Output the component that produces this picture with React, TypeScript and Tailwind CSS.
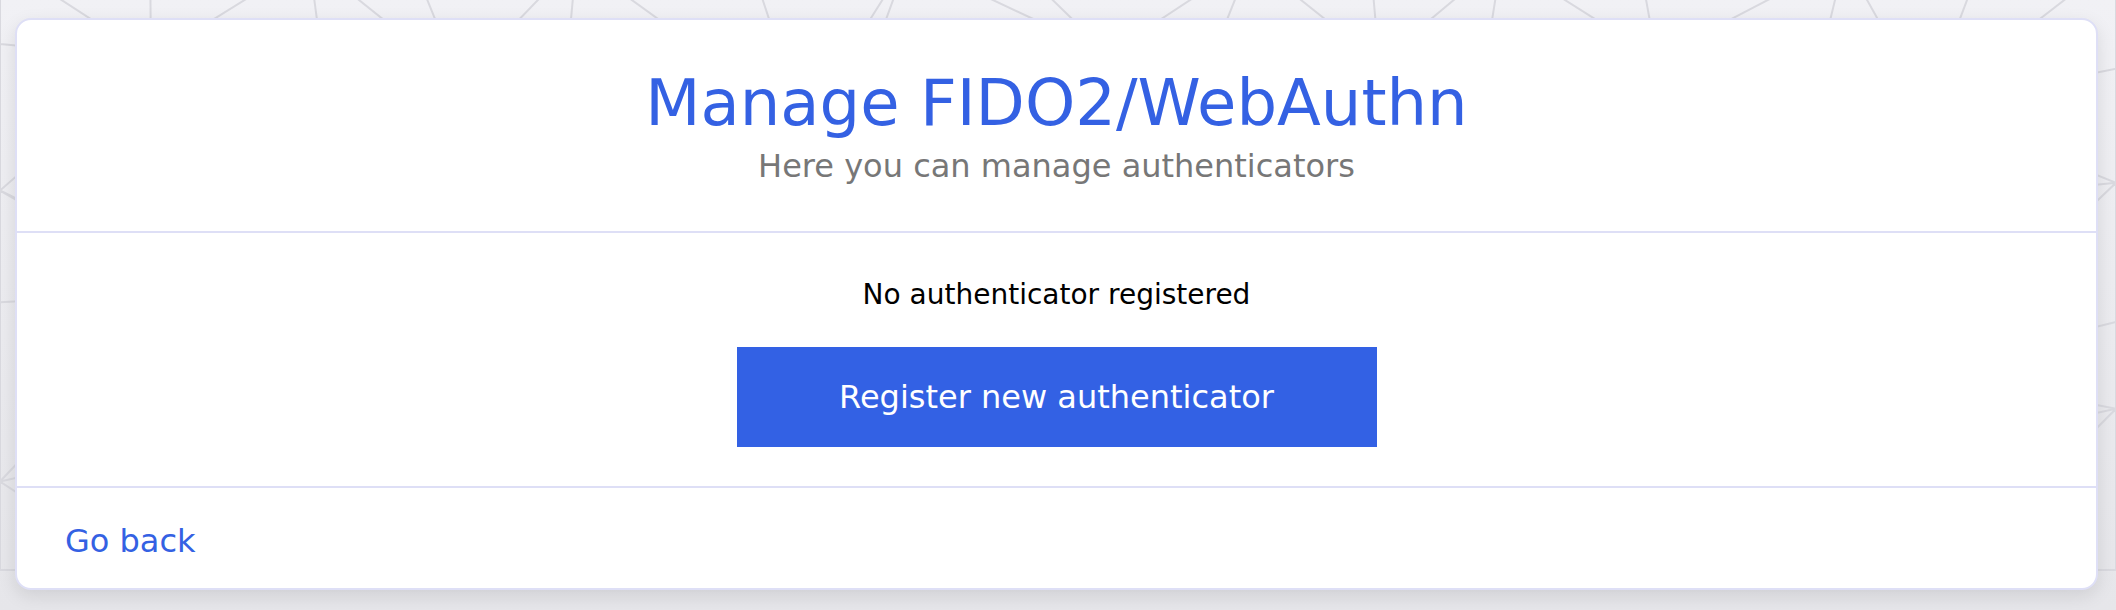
import React from 'react';

// low-poly backdrop: jittered grid split into triangles
function Backdrop() {
  const cols = 14;
  const rows = 5;
  const w = 2116;
  const h = 610;
  let seed = 7;
  const rand = () => {
    seed = (seed * 9301 + 49297) % 233280;
    return seed / 233280;
  };
  const pts: [number, number][][] = [];
  for (let r = 0; r <= rows; r++) {
    const row: [number, number][] = [];
    for (let c = 0; c <= cols; c++) {
      const jx = c === 0 || c === cols ? 0 : (rand() - 0.5) * 110;
      const jy = r === 0 || r === rows ? 0 : (rand() - 0.5) * 90;
      row.push([(c * w) / cols + jx, (r * h) / rows + jy - 40]);
    }
    pts.push(row);
  }
  const lines: string[] = [];
  for (let r = 0; r <= rows; r++) {
    for (let c = 0; c <= cols; c++) {
      const p = pts[r][c];
      if (c < cols) lines.push(`M${p[0]},${p[1]}L${pts[r][c + 1][0]},${pts[r][c + 1][1]}`);
      if (r < rows) lines.push(`M${p[0]},${p[1]}L${pts[r + 1][c][0]},${pts[r + 1][c][1]}`);
      if (r < rows && c < cols) {
        const d = (r + c) % 2 === 0 ? pts[r + 1][c + 1] : pts[r + 1][c];
        const s = (r + c) % 2 === 0 ? p : pts[r][c + 1];
        lines.push(`M${s[0]},${s[1]}L${d[0]},${d[1]}`);
      }
    }
  }
  return (
    <svg className="absolute inset-0 h-full w-full" viewBox={`0 0 ${w} ${h}`} preserveAspectRatio="none">
      <defs>
        <linearGradient id="bgfade" x1="0" y1="0" x2="0" y2="1">
          <stop offset="0" stopColor="#f1f1f5" />
          <stop offset="1" stopColor="#e6e6ea" />
        </linearGradient>
      </defs>
      <rect width={w} height={h} fill="url(#bgfade)" />
      <path d={lines.join('')} stroke="#d9d9df" strokeWidth="2" fill="none" />
    </svg>
  );
}

export default function App() {
  return (
    <div className="relative min-h-[610px] overflow-hidden bg-[#eeeef2] font-['DejaVu_Sans',Verdana,sans-serif]">
      <Backdrop />
      <div className="relative pt-[18px] pl-[15px] pr-[18px] pb-[20px]">
        <div className="rounded-[16px] border-2 border-[#dedff6] bg-white shadow-[0_6px_18px_rgba(0,0,0,0.10)]">
          {/* header */}
          <div className="border-b-2 border-[#dedff6] pt-[45px] pb-[45px] text-center">
            <h1 className="mb-[5px] text-[64px] leading-[76px] text-[#3461e3]">Manage FIDO2/WebAuthn</h1>
            <p className="text-[32px] leading-[40px] text-[#777777]">Here you can manage authenticators</p>
          </div>

          {/* body */}
          <div className="flex flex-col items-center border-b-2 border-[#dedff6] pt-[44px] pb-[39px]">
            <p className="text-[28px] leading-[36px] text-black">No authenticator registered</p>
            <button className="mt-[34px] h-[100px] w-[640px] bg-[#3361e4] text-[32px] text-white">
              Register new authenticator
            </button>
          </div>

          {/* footer */}
          <div className="pt-[33px] pb-[27px] pl-[48px]">
            <a href="#" className="text-[32px] leading-[40px] text-[#3461e3]">
              Go back
            </a>
          </div>
        </div>
      </div>
    </div>
  );
}
